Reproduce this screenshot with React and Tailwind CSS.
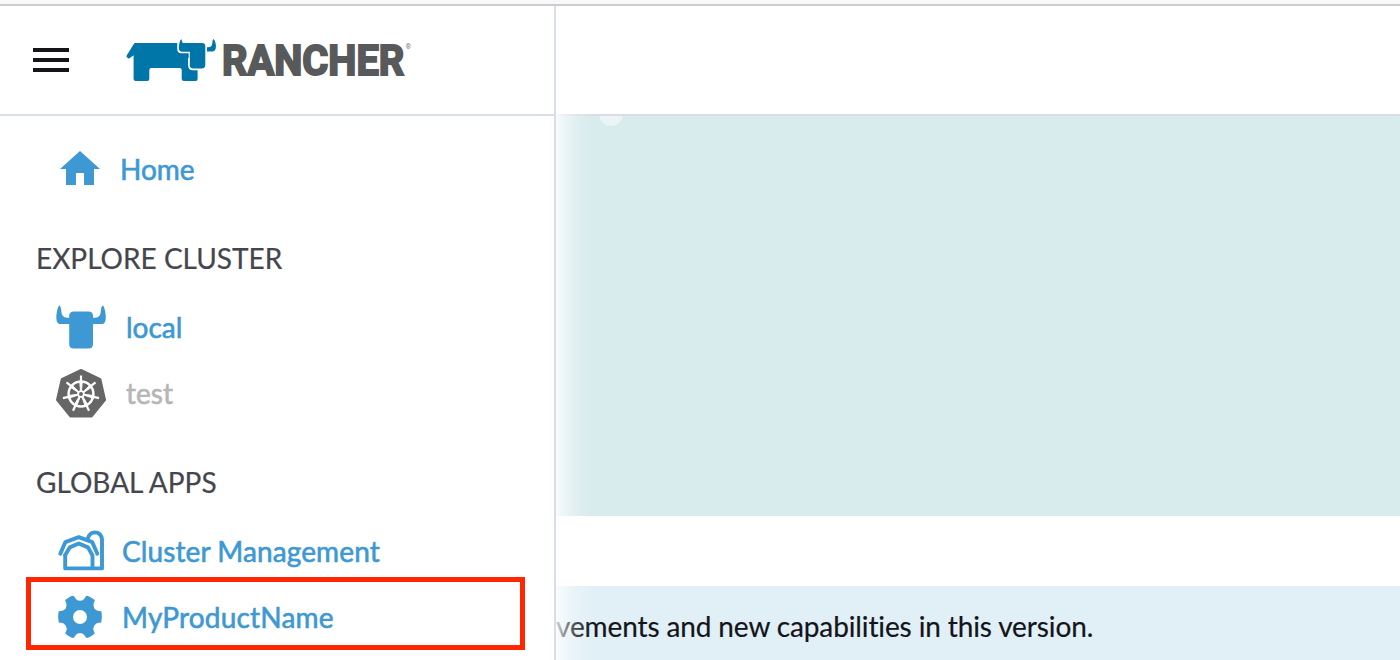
import React from "react";

function RancherLogo() {
  return (
    <svg className="ml-[55px] block h-[60px] w-[290px] shrink-0 overflow-visible" viewBox="124 30 290 60" role="img" aria-label="Rancher">
      <g fill="#0075a8">
        <path d="M135.5 43 H177.2 V48.5 Q177.2 53.2 181 53.2 H188.7 V58 H188 V65 Q188 70.3 193 70.3 H197.6 V79 Q197.6 81 195.6 81 H184 Q181.7 81 181.7 79 V70 Q181.7 68 179.7 68 H151.5 Q149.3 68 149.3 70 V79 Q149.3 81 147.3 81 H135.8 Q133.6 81 133.6 79 V55.2 L129.5 58.3 Q128.3 58.8 127.2 57.6 Q126 56.3 126.7 55.4 L133.8 44 Q134.4 43 135.5 43Z" />
        <path d="M181.3 39 Q180.3 39.5 179.5 42.7 Q178.8 45.4 178.8 48 Q178.9 51.8 182.3 51.8 H189.8 V65 Q189.8 68.4 193.2 68.4 H201.8 Q205.3 68.4 205.3 65 V46.3 Q205.3 43 202 43 H182.7 Z" />
        <path d="M213.4 39 Q214.8 39.7 215.7 43.7 Q216.3 46.3 215.7 48.6 Q215 51.5 212.2 51.5 H207 V47.2 Q212 47.4 212.2 43.7 Q212.3 40 213.4 39Z" />
      </g>
      <text x="222" y="74.6" textLength="182.3" lengthAdjust="spacingAndGlyphs" fill="#58595b" stroke="#58595b" strokeWidth="2" className="font-['Roboto',sans-serif] text-[42px] font-bold">RANCHER</text>
      <text x="405.5" y="48.8" fill="#77787a" className="font-['Roboto',sans-serif] text-[7px]">®</text>
    </svg>
  );
}

function HomeIcon() {
  return (
    <svg className="block h-[50px] w-[50px]" viewBox="55 145 50 50" fill="#3d98d3">
      <path d="M80 151 L100 169 H94 V185 H84 V173 H76 V185 H66 V169 H60Z" />
    </svg>
  );
}

function LocalIcon() {
  return (
    <svg className="block h-[50px] w-[50px]" viewBox="56 303 50 50" fill="#3d98d3">
      <path d="M59.3 305.5 Q60.9 306 61.3 311 Q61.5 317.4 67 317.7 H69.2 V316 Q69.2 311.5 73.7 311.5 H88.5 Q93 311.5 93 316 V317.7 H95.2 Q100.7 317.4 100.8 311 Q101.2 306 102.8 305.5 Q104.3 306.5 105.4 312.8 Q106.1 317 105.5 320.4 Q104.7 324 101.3 324 H93 V344.3 Q93 348.5 88.5 348.5 H73.7 Q69.2 348.5 69.2 344.3 V324 H60.8 Q57.4 324 56.6 320.4 Q56 317 56.7 312.8 Q57.8 306.5 59.3 305.5Z" />
    </svg>
  );
}

const spokes = [0, 1, 2, 3, 4, 5, 6];

function KubernetesIcon() {
  return (
    <svg className="block h-[50px] w-[50px]" viewBox="56 369 50 50">
      <path d="M81 369.8 L100.4 379 L105.2 400 L91.8 416.5 H70.3 L56.9 400 L61.7 379Z" fill="#666" stroke="#666" strokeWidth="1.8" strokeLinejoin="round" />
      <g fill="none" stroke="#fff">
        <circle cx="81" cy="394" r="12.4" strokeWidth="2.5" />
        <circle cx="81" cy="394" r="2.9" strokeWidth="1.8" />
        {spokes.map((n) => (
          <g key={n} transform={`rotate(${(n * 360) / 7} 81 394)`}>
            <path d="M81 381 V375.5" strokeWidth="2.2" />
            <path d="M79.7 382 L80.5 390.5 H81.5 L82.3 382Z" fill="#fff" strokeWidth=".9" />
          </g>
        ))}
      </g>
    </svg>
  );
}

function BarnIcon() {
  return (
    <svg className="block h-[50px] w-[50px]" viewBox="56 527 50 50" fill="none" stroke="#3d98d3" strokeLinejoin="round" strokeLinecap="round">
      <path d="M60.3 553.8 L65.3 542.2 L78.8 537.2 L92.3 542.2 L97.3 553.8" strokeWidth="3.9" />
      <path d="M65.2 555 V568.4 H102 V539.5 Q101.2 532.5 94.8 532.4 Q89.7 532.6 87.8 538.5" strokeWidth="3.9" />
      <path d="M65.2 555 L69.7 547.4 L78.8 543.5 L88 547.4 L92.5 555.5 V567.5" strokeWidth="3.9" />
    </svg>
  );
}

function GearIcon() {
  return (
    <svg className="block h-[50px] w-[50px]" viewBox="55 593 50 50">
      <path fill="#3d98d3" fillRule="evenodd" d="M70.8 596.2 L73.2 595.8 Q74.4 595.8 75.3 598.3 Q76.7 600.8 80 600.8 Q83.3 600.8 84.7 598.3 Q85.6 595.8 86.8 595.8 L89.2 596.6 L94.5 599.7 Q95.4 600.6 93.9 602.7 Q92.6 605.2 94.2 608.2 Q96 611 98.8 611 Q101.3 610.6 101.5 611.8 L101.9 617 L101.3 622 Q101 623.2 98.8 622.7 Q96 622.8 94.2 625.7 Q92.6 628.5 93.9 631.2 Q95.1 633.2 94.4 634 L89.4 637.3 L86.8 637.9 Q85.6 637.7 84.7 635.6 Q83.2 633 80 633 Q76.8 633 75.3 635.6 Q74.4 637.7 73.2 637.9 L70.6 637.3 L65.6 634 Q64.9 633.2 66.1 631.2 Q67.4 628.5 65.8 625.7 Q64 622.8 61.2 622.7 Q59 623.2 58.7 622 L58.1 617 L58.5 611.8 Q58.7 610.6 61.2 611 Q64 611 65.8 608.2 Q67.4 605.2 66.1 602.7 Q64.6 600.6 65.5 599.7Z M80 610 A7 7 0 1 0 80 624 A7 7 0 1 0 80 610Z" />
    </svg>
  );
}

function Heading({ children }) {
  return (
    <h2 className="flex h-[92px] items-center pl-9 pt-[18px] text-[28px] leading-[34px] text-[#45464d] [-webkit-text-stroke:0.2px_currentColor]">{children}</h2>
  );
}

function NavItem({ icon, label, row, text }) {
  return (
    <a className={`flex h-[66px] items-center ${row}`}>
      {icon}
      <span className={`pb-0.5 text-[28px] leading-[34px] [-webkit-text-stroke:0.6px_currentColor] ${text}`}>{label}</span>
    </a>
  );
}

export default function App() {
  return (
    <div className="flex h-[660px] w-[1400px] flex-col overflow-hidden bg-white font-['Lato',sans-serif] [font-variant-ligatures:none]">
      <div className="h-[6px] shrink-0 border-b-2 border-[#cccccf] bg-[#f8f8f9]" />
      <div className="flex min-h-0 flex-1">
        <aside className="relative w-[556px] shrink-0 border-r-2 border-[#d9dde7]">
          <header className="flex h-[110px] items-center border-b-2 border-[#d9dde7] pl-[33px]">
            <button className="flex w-9 shrink-0 flex-col gap-1.5" aria-label="Menu">
              <span className="h-1 w-full bg-[#141419]" />
              <span className="h-1 w-full bg-[#141419]" />
              <span className="h-1 w-full bg-[#141419]" />
            </button>
            <RancherLogo />
          </header>
          <nav className="pt-[21px]">
            <NavItem icon={<HomeIcon />} label="Home" row="gap-[15px] pl-[55px]" text="text-[#3d98d3]" />
            <Heading>EXPLORE CLUSTER</Heading>
            <NavItem icon={<LocalIcon />} label="local" row="gap-5 pl-14" text="text-[#3d98d3]" />
            <NavItem icon={<KubernetesIcon />} label="test" row="gap-5 pl-14" text="text-[#b6b6b6]" />
            <Heading>GLOBAL APPS</Heading>
            <NavItem icon={<BarnIcon />} label="Cluster Management" row="gap-4 pl-14" text="tracking-[0.1px] text-[#3d98d3]" />
            <NavItem icon={<GearIcon />} label="MyProductName" row="gap-[17px] pl-[55px]" text="tracking-[0.2px] text-[#3d98d3]" />
          </nav>
          <div className="absolute left-[26px] top-[571px] h-[73px] w-[499px] border-[5px] border-[#ff2600]" />
        </aside>
        <main className="relative flex min-w-0 flex-1 flex-col">
          <div className="h-[110px] shrink-0 border-b-2 border-[#d9dde7]" />
          <section className="h-[400px] shrink-0 overflow-hidden bg-[#d8ebed]">
            <div className="-mt-[14px] ml-[43px] size-6 rounded-full bg-[#ebf5f6]" />
          </section>
          <div className="h-[70px] shrink-0" />
          <section className="flex min-h-0 flex-1 items-center overflow-hidden bg-[#e1f0f7] pt-[5px]">
            <p className="whitespace-nowrap text-[28px] leading-[34px] tracking-[-0.12px] text-[#141419] [-webkit-text-stroke:0.2px_currentColor]">vements and new capabilities in this version.</p>
          </section>
          <div className="absolute bottom-0 left-0 top-[108px] w-9 bg-linear-to-r from-white/80 via-white/25 to-white/0" />
        </main>
      </div>
    </div>
  );
}
